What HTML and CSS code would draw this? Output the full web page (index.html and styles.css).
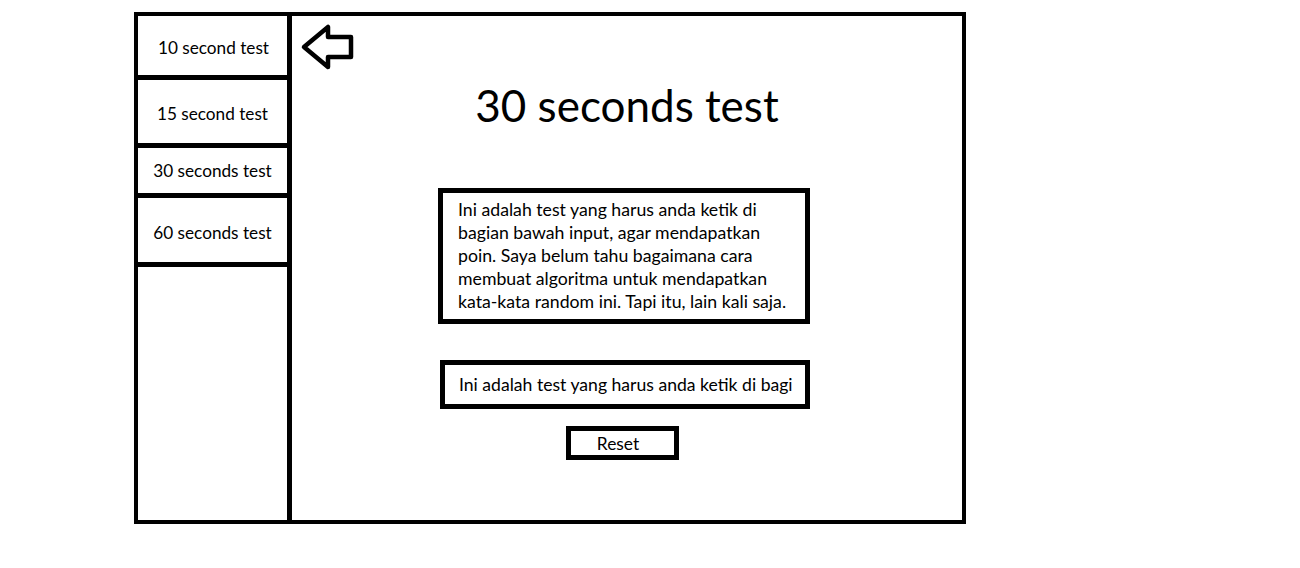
FILE: index.html
```html
<!DOCTYPE html>
<html lang="id">
<head>
<meta charset="utf-8">
<title>Typing Test</title>
<link rel="stylesheet" href="styles.css">
</head>
<body>
<div class="frame">
  <nav class="sidebar">
    <div class="item item-1">10 second test</div>
    <div class="item item-2">15 second test</div>
    <div class="item item-3">30 seconds test</div>
    <div class="item item-4">60 seconds test</div>
  </nav>
  <main class="main">
    <svg class="arrow" width="58" height="50" viewBox="0 0 58 50" aria-hidden="true">
      <polygon points="6,25 30,5 30,15 53,15 53,35 30,35 30,45" fill="#fff" stroke="#000" stroke-width="4.5" stroke-linejoin="round"/>
    </svg>
    <h1 class="title">30 seconds test</h1>
    <p class="prompt">Ini adalah test yang harus anda ketik di<br>bagian bawah input, agar mendapatkan<br>poin. Saya belum tahu bagaimana cara<br>membuat algoritma untuk mendapatkan<br>kata-kata random ini. Tapi itu, lain kali saja.</p>
    <input class="answer" type="text" value="Ini adalah test yang harus anda ketik di bagi">
    <button class="reset" type="button">Reset</button>
  </main>
</div>
</body>
</html>
```

FILE: styles.css
```css
html, body {
  margin: 0;
  padding: 0;
  background: #fff;
}

body {
  font-family: Lato, "Open Sans", sans-serif;
  color: #000;
}

.frame {
  margin: 12px 0 0 134px;
  width: 832px;
  height: 512px;
  box-sizing: border-box;
  border: 4px solid #000;
  display: flex;
}

.sidebar {
  width: 149px;
  border-right: 5px solid #000;
  display: flex;
  flex-direction: column;
}

.item {
  display: flex;
  align-items: center;
  justify-content: center;
  box-sizing: border-box;
  border-bottom: 5px solid #000;
  font-size: 17.2px;
  flex: none;
}

.item-1 { height: 64px; padding-left: 2px; padding-top: 3px; }
.item-2 { height: 68px; padding-top: 4px; }
.item-3 { height: 50px; }
.item-4 { height: 69px; padding-top: 5px; }

.main {
  flex: 1;
  display: flex;
  flex-direction: column;
  align-items: center;
}

.arrow {
  align-self: flex-start;
  margin: 6px 0 0 6px;
  display: block;
}

.title {
  margin: 8px 0 0;
  font-size: 44px;
  font-weight: 400;
  line-height: 50px;
}

.prompt {
  margin: 58px 6px 0 0;
  width: 372px;
  box-sizing: border-box;
  border: 5px solid #000;
  padding: 5px 4px 6px 15px;
  font-size: 17.7px;
  line-height: 23px;
  white-space: nowrap;
}

.answer {
  margin: 36px 4px 0 0;
  width: 370px;
  height: 49px;
  box-sizing: border-box;
  border: 5px solid #000;
  border-radius: 0;
  padding: 0 0 0 14px;
  font-family: inherit;
  font-size: 17.6px;
  color: #000;
  background: #fff;
  outline: none;
}

.reset {
  margin: 17px 10px 0 0;
  width: 113px;
  height: 34px;
  box-sizing: border-box;
  border: 5px solid #000;
  border-radius: 0;
  padding: 0 8px 0 0;
  background: #fff;
  font-family: inherit;
  font-size: 17.4px;
  color: #000;
}
```
